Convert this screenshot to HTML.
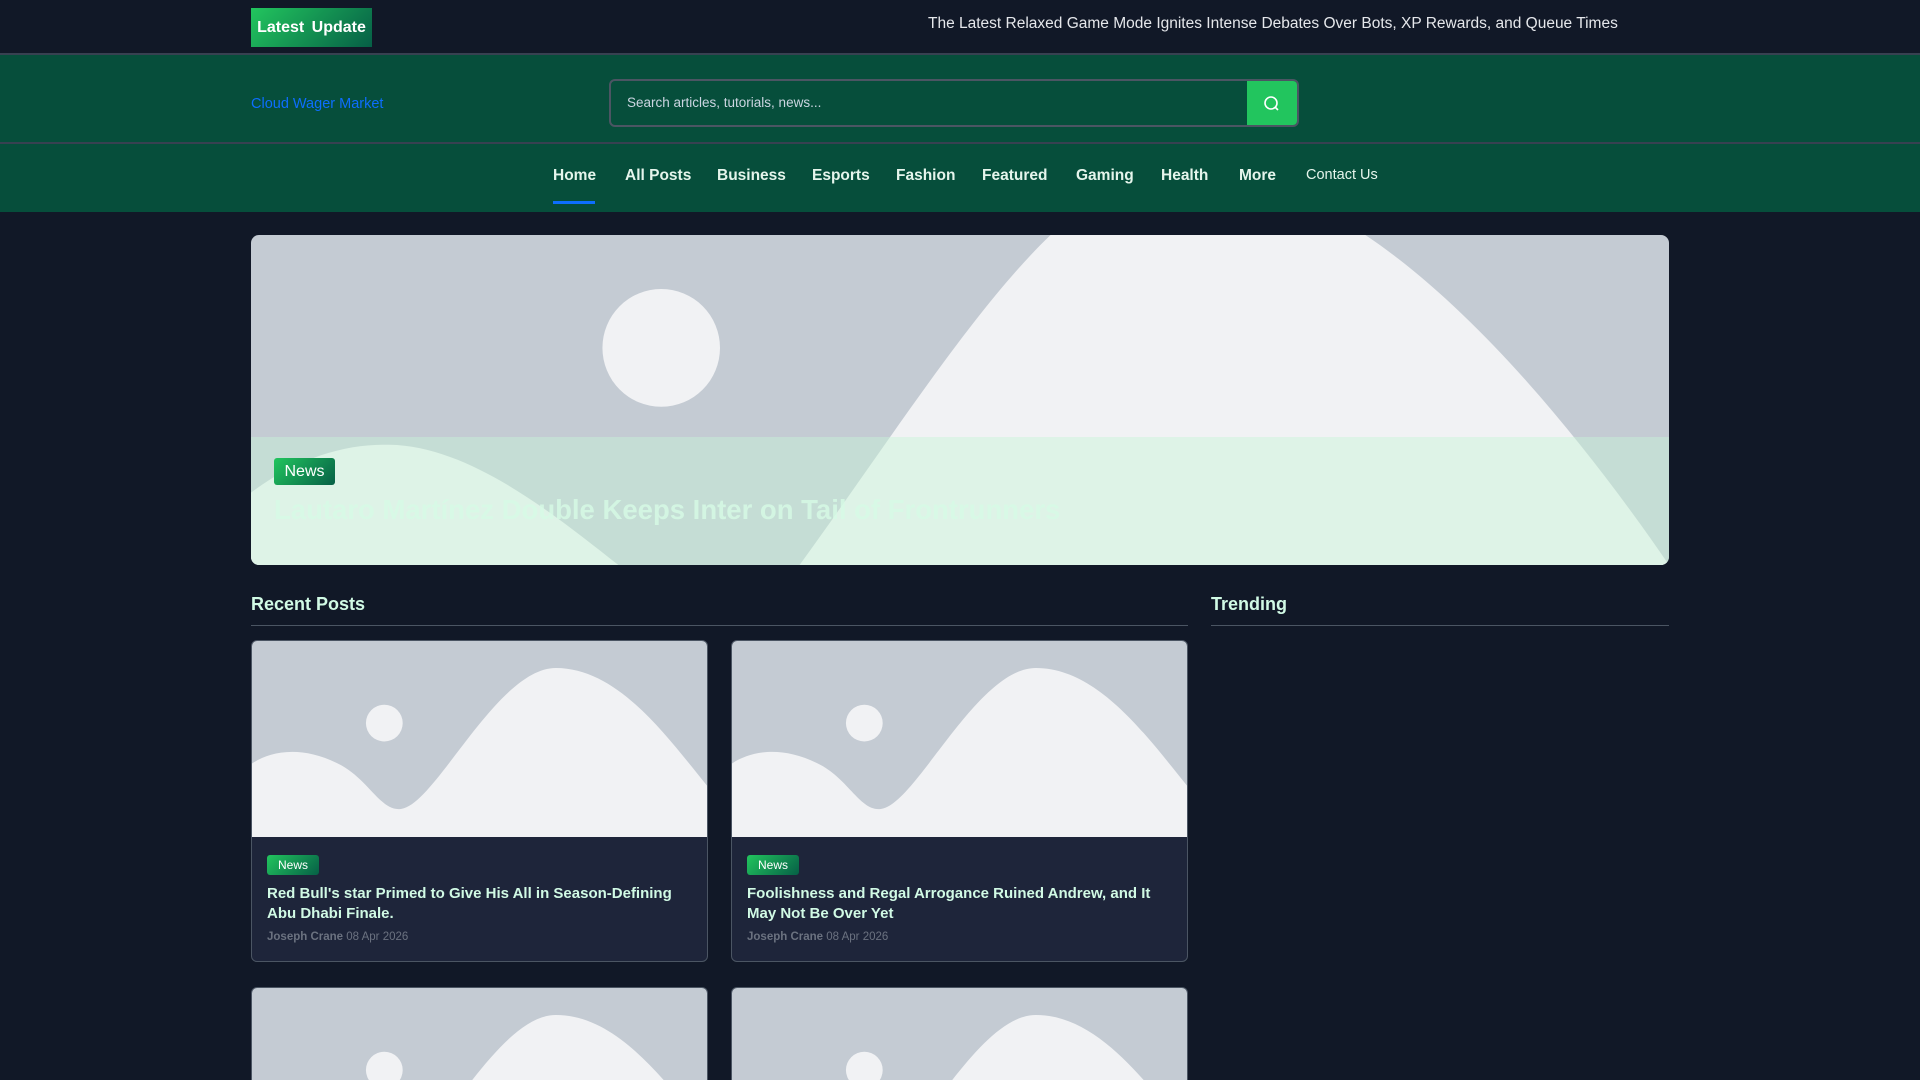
<!DOCTYPE html>
<html style="height:1080px;overflow:hidden"><head><meta charset="utf-8"><style>
*{box-sizing:border-box;margin:0;padding:0}
body{width:1920px;height:1080px;overflow:hidden;background:#111827;font-family:"Liberation Sans","DejaVu Sans",sans-serif;color:#d1fae5;position:relative}
.top{height:55px;background:#111827;border-bottom:2px solid #374151;position:relative}
.latest{position:absolute;left:251px;top:8px;width:121px;height:39px;background:linear-gradient(135deg,#22c55e,#065f46);color:#fff;font-weight:bold;font-size:16px;line-height:39px;text-align:center;word-spacing:3px}
.ticker{position:absolute;left:928px;top:15px;font-size:15.5px;color:#e5e7eb}
.hdr{height:89px;background:#064e3b;border-bottom:2px solid #374151;position:relative}
.brand{position:absolute;left:251px;top:41px;color:#0d6efd;font-size:14.5px}
.search{position:absolute;left:609px;top:24px;width:690px;height:48px;border:2px solid #4b5563;border-radius:6px;background:#064e3b;overflow:hidden}
.search span{position:absolute;left:16px;top:14px;font-size:13.5px;color:#cbd5e1}
.search .btn{position:absolute;right:0;top:0;width:50px;height:100%;background:#22c55e}
.nav{height:68px;background:#064e3b;position:relative}
.nav a{position:absolute;top:23px;font-size:15.5px;font-weight:bold;color:#e5f5ec;text-decoration:none}
.ul{position:absolute;left:553px;top:57px;width:42px;height:3px;background:#0d6efd}
.hero{position:absolute;left:251px;top:235px;width:1418px;height:330px;border-radius:8px;overflow:hidden;background:#c4cbd3}
.ov{position:absolute;left:0;top:202px;width:100%;height:128px;background:rgba(200,245,215,0.45)}
.badge{position:absolute;background:linear-gradient(135deg,#22c55e,#065f46);color:#fff;border-radius:3px}
.htitle{position:absolute;left:23px;top:259px;font-size:27.5px;font-weight:bold;color:#d7fbe6;opacity:.8;white-space:nowrap}
.sec{position:absolute;top:594px;font-size:18px;font-weight:bold;color:#d1fae5;border-bottom:1px solid #4b5563;padding-bottom:10px}
.card{position:absolute;width:457px;background:#1e253a;border:1px solid #4b5563;border-radius:6px;overflow:hidden}
.card svg{display:block}
.ct{position:absolute;left:15px;top:243px;font-size:15px;font-weight:bold;line-height:20px;color:#d1fae5;width:432px}
.meta{position:absolute;left:15px;top:290px;font-size:11.5px;color:#6b7280}
</style></head><body>
<div class="top"><div class="latest">Latest Update</div><div class="ticker">The Latest Relaxed Game Mode Ignites Intense Debates Over Bots, XP Rewards, and Queue Times</div></div>
<div class="hdr"><div class="brand">Cloud Wager Market</div>
<div class="search"><span>Search articles, tutorials, news...</span><div class="btn"><svg width="50" height="46" viewBox="0 0 50 46"><circle cx="24" cy="22" r="6" fill="none" stroke="#fff" stroke-width="1.6"/><line x1="28.5" y1="26.5" x2="31" y2="29" stroke="#fff" stroke-width="1.6"/></svg></div></div></div>
<div class="nav">
<a style="left:553px">Home</a><a style="left:625px">All Posts</a><a style="left:717px">Business</a><a style="left:812px">Esports</a><a style="left:896px">Fashion</a><a style="left:982px">Featured</a><a style="left:1076px">Gaming</a><a style="left:1161px">Health</a><a style="left:1239px">More</a><a style="left:1306px;font-weight:normal;font-size:14.5px">Contact Us</a>
<div class="ul"></div></div>
<div class="hero">
<svg width="1418" height="330" viewBox="0 0 1158 269" preserveAspectRatio="none" style="position:absolute;left:0;top:0"><circle cx="335" cy="92" r="48" fill="#f1f2f4"/><path d="M0,210 C40,180 80,170 113,171 C180,172 250,230 300,269 L0,269Z" fill="#f1f2f4"/><path d="M448,269 C520,170 590,60 653,0 L910,0 C1000,60 1090,170 1158,269Z" fill="#f1f2f4"/></svg>
<div class="ov"></div>
<div class="badge" style="left:23px;top:223px;width:61px;height:27px;font-size:16px;line-height:27px;text-align:center">News</div>
<div class="htitle">Lautaro Martínez Double Keeps Inter on Tail of Frontrunners</div>
</div>
<div class="sec" style="left:251px;width:937px">Recent Posts</div>
<div class="sec" style="left:1211px;width:458px">Trending</div>
<div class="card" style="left:251px;top:640px;height:322px">
<svg width="457" height="196" viewBox="0 0 373 160" preserveAspectRatio="none"><rect width="373" height="160" fill="#c4cbd3"/><circle cx="108" cy="67" r="15" fill="#f1f2f4"/><path d="M0,100 C15,90 40,85 70,100 C95,112 105,140 122,137 C150,133 200,22 248,22 C300,22 340,80 373,120 L373,160 L0,160Z" fill="#f1f2f4"/></svg>
<div class="badge" style="left:15px;top:214px;width:52px;height:20px;font-size:12px;line-height:20px;text-align:center">News</div>
<div class="ct">Red Bull's star Primed to Give His All in Season-Defining Abu Dhabi Finale.</div>
<div class="meta"><b>Joseph Crane</b> 08 Apr 2026</div></div>
<div class="card" style="left:731px;top:640px;height:322px">
<svg width="457" height="196" viewBox="0 0 373 160" preserveAspectRatio="none"><rect width="373" height="160" fill="#c4cbd3"/><circle cx="108" cy="67" r="15" fill="#f1f2f4"/><path d="M0,100 C15,90 40,85 70,100 C95,112 105,140 122,137 C150,133 200,22 248,22 C300,22 340,80 373,120 L373,160 L0,160Z" fill="#f1f2f4"/></svg>
<div class="badge" style="left:15px;top:214px;width:52px;height:20px;font-size:12px;line-height:20px;text-align:center">News</div>
<div class="ct">Foolishness and Regal Arrogance Ruined Andrew, and It May Not Be Over Yet</div>
<div class="meta"><b>Joseph Crane</b> 08 Apr 2026</div></div>
<div class="card" style="left:251px;top:987px;height:93px;border-bottom:none;border-radius:6px 6px 0 0">
<svg width="457" height="196" viewBox="0 0 373 160" preserveAspectRatio="none"><rect width="373" height="160" fill="#c4cbd3"/><circle cx="108" cy="67" r="15" fill="#f1f2f4"/><path d="M0,100 C15,90 40,85 70,100 C95,112 105,140 122,137 C150,133 200,22 248,22 C300,22 340,80 373,120 L373,160 L0,160Z" fill="#f1f2f4"/></svg></div>
<div class="card" style="left:731px;top:987px;height:93px;border-bottom:none;border-radius:6px 6px 0 0">
<svg width="457" height="196" viewBox="0 0 373 160" preserveAspectRatio="none"><rect width="373" height="160" fill="#c4cbd3"/><circle cx="108" cy="67" r="15" fill="#f1f2f4"/><path d="M0,100 C15,90 40,85 70,100 C95,112 105,140 122,137 C150,133 200,22 248,22 C300,22 340,80 373,120 L373,160 L0,160Z" fill="#f1f2f4"/></svg></div>
</body></html>
